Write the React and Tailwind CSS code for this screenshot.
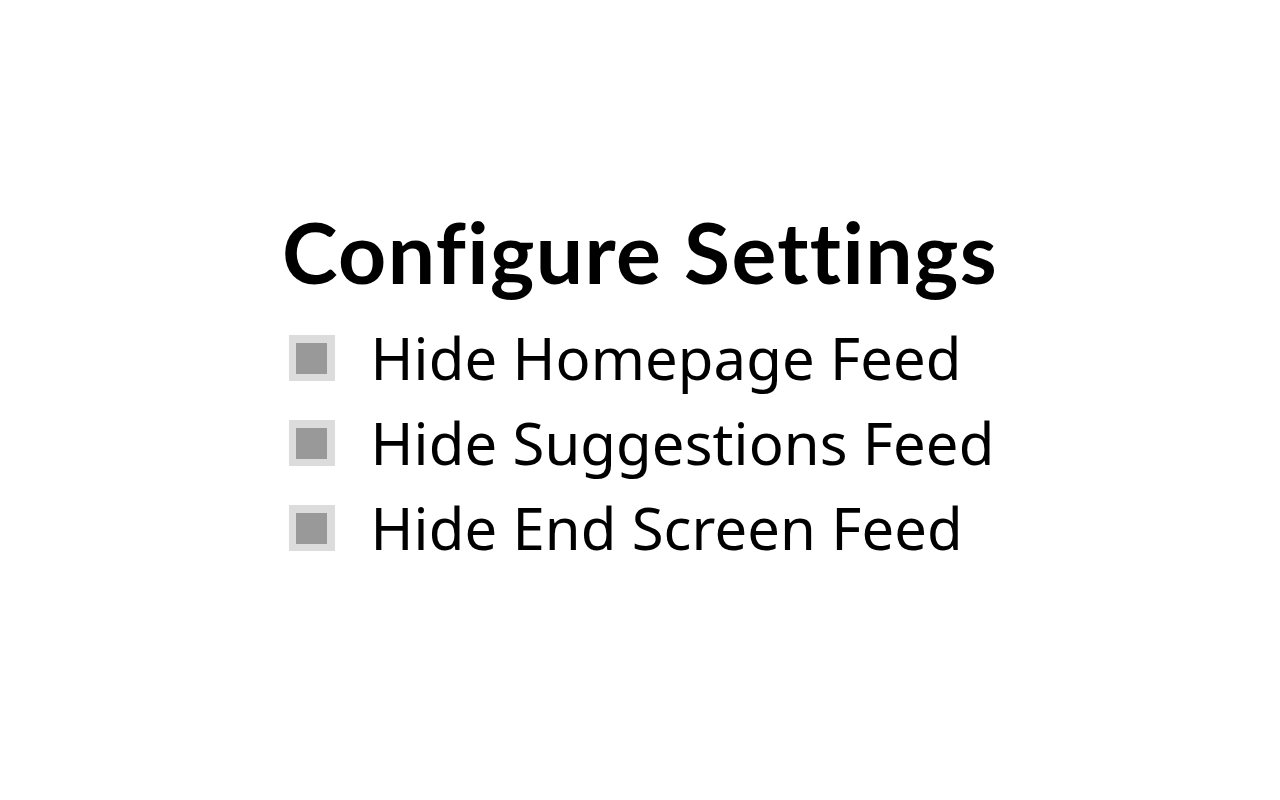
export default function App() {
  const items = ['Hide Homepage Feed', 'Hide Suggestions Feed', 'Hide End Screen Feed'];

  return (
    <div className="w-full h-[800px] bg-white flex flex-col items-center pt-[202px]">
      <h1 className="text-[84px] leading-[100px] font-bold text-black tracking-[1.4px] font-['Lato',sans-serif]">
        Configure Settings
      </h1>
      <div className="flex flex-col mt-[33px] gap-[39px] ml-[3px]">
        {items.map((label) => (
          <label key={label} className="flex items-center gap-[36px] h-[46px]">
            <span className="w-[46px] h-[46px] bg-[#dcdcdc] flex items-center justify-center shrink-0">
              <span className="w-[31px] h-[31px] bg-[#999999]" />
            </span>
            <span className="text-[58px] leading-none text-black tracking-[0.1px] font-['Noto_Sans',sans-serif]">
              {label}
            </span>
          </label>
        ))}
      </div>
    </div>
  );
}
